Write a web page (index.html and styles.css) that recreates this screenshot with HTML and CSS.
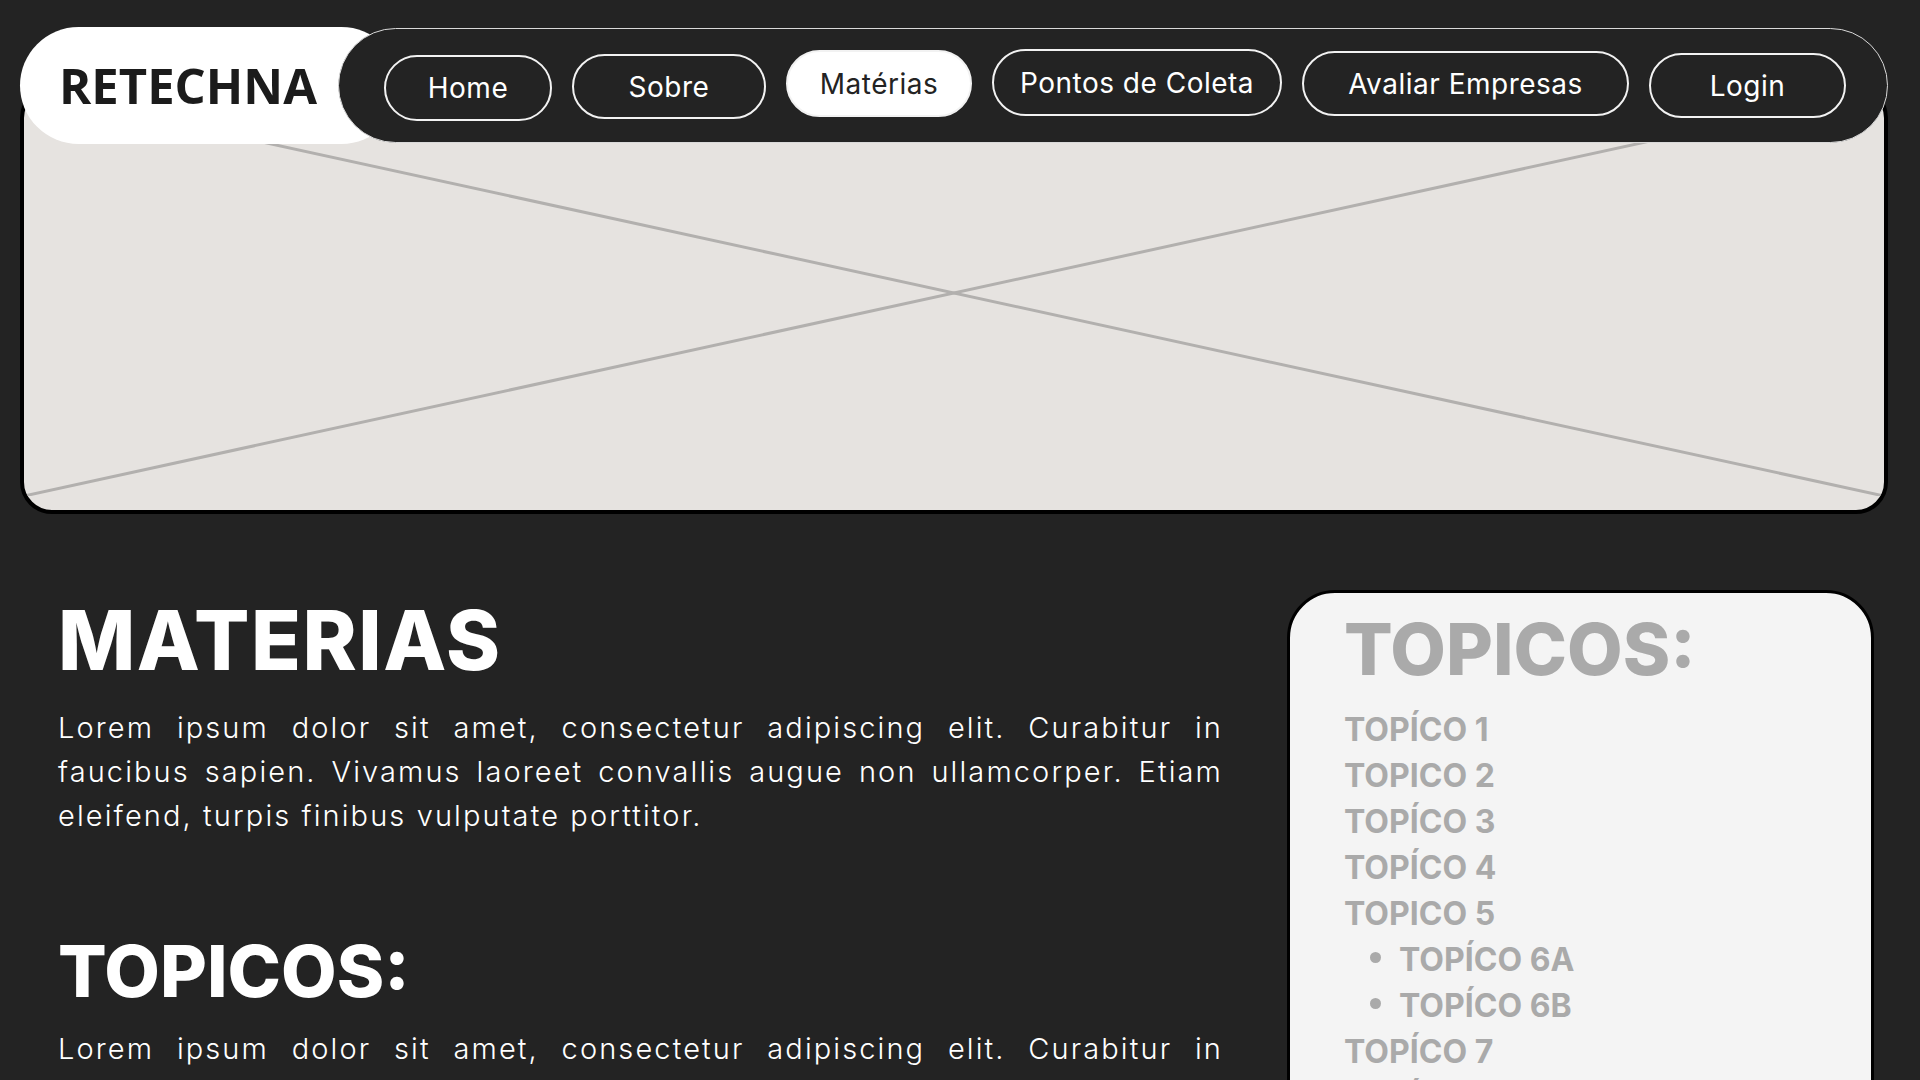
FILE: index.html
```html
<!DOCTYPE html>
<html lang="pt-BR">
<head>
<meta charset="utf-8">
<title>RETECHNA - Matérias</title>
<link rel="stylesheet" href="styles.css">
</head>
<body>
<div class="top">
  <header class="header">
    <div class="brand">RETECHNA</div>
    <nav class="nav">
      <a class="btn w-home" href="#">Home</a>
      <a class="btn w-sobre" href="#">Sobre</a>
      <a class="btn btn-active w-materias" href="#">Matérias</a>
      <a class="btn w-pontos" href="#">Pontos de Coleta</a>
      <a class="btn w-avaliar" href="#">Avaliar Empresas</a>
      <a class="btn w-login" href="#">Login</a>
    </nav>
  </header>
  <div class="hero">
    <svg class="hero-svg" viewBox="0 0 1000 400" preserveAspectRatio="none" aria-hidden="true">
      <line x1="0" y1="0" x2="1000" y2="400" vector-effect="non-scaling-stroke"/>
      <line x1="0" y1="400" x2="1000" y2="0" vector-effect="non-scaling-stroke"/>
    </svg>
  </div>
</div>

<main class="main">
  <section class="content">
    <h1 class="title">MATERIAS</h1>
    <p class="text">Lorem ipsum dolor sit amet, consectetur adipiscing elit. Curabitur in faucibus sapien. Vivamus laoreet convallis augue non ullamcorper. Etiam eleifend, turpis finibus vulputate porttitor.</p>
    <h2 class="subtitle">TOPICOS:</h2>
    <p class="text text-tight">Lorem ipsum dolor sit amet, consectetur adipiscing elit. Curabitur in faucibus sapien. Vivamus laoreet convallis augue non ullamcorper. Etiam eleifend, turpis finibus vulputate porttitor.</p>
  </section>

  <aside class="card">
    <h2 class="card-title">TOPICOS:</h2>
    <ul class="topics">
      <li>TOPÍCO 1</li>
      <li>TOPICO 2</li>
      <li>TOPÍCO 3</li>
      <li>TOPÍCO 4</li>
      <li>TOPICO 5
        <ul class="subtopics">
          <li>TOPÍCO 6A</li>
          <li>TOPÍCO 6B</li>
        </ul>
      </li>
      <li>TOPÍCO 7</li>
      <li>TOPÍCO 8</li>
    </ul>
  </aside>
</main>
</body>
</html>
```

FILE: styles.css
```css
* {
  box-sizing: border-box;
}

html {
  overflow: hidden;
}

body {
  margin: 0;
  background: #232323;
  font-family: Inter, "Noto Sans", sans-serif;
  color: #ffffff;
}

.top {
  padding: 27px 32px 0 20px;
}

.header {
  position: relative;
  z-index: 2;
  display: flex;
  align-items: center;
}

.brand {
  flex: 0 0 380px;
  height: 117px;
  border-radius: 60px;
  background: #ffffff;
  color: #1b1b1b;
  font-family: "Open Sans", "Liberation Sans", sans-serif;
  font-weight: 700;
  font-size: 49px;
  line-height: 49px;
  letter-spacing: 0;
  display: flex;
  align-items: center;
  padding-left: 39px;
}

.nav {
  flex: 1;
  height: 115px;
  margin-left: -62px;
  border: 1.5px solid #d9d9d9;
  border-radius: 60px;
  background: #232323;
  display: flex;
  align-items: center;
  gap: 20px;
  padding-left: 45px;
}

.btn {
  height: 65px;
  border: 2px solid #f2f2f2;
  border-radius: 40px;
  display: flex;
  align-items: center;
  justify-content: center;
  color: #ffffff;
  text-decoration: none;
  font-size: 28px;
  line-height: 28px;
  letter-spacing: 0.5px;
}

.btn-active {
  background: #ffffff;
  color: #232323;
}

.w-home { width: 168px; height: 66px; margin-top: 5px; }
.w-sobre { width: 194px; margin-top: 2px; }
.w-materias { width: 186px; height: 67px; margin-bottom: 4px; }
.w-pontos { width: 290px; height: 67px; margin-bottom: 6px; }
.w-avaliar { width: 327px; margin-bottom: 4px; }
.w-login { width: 197px; }

.hero {
  position: relative;
  z-index: 1;
  margin-top: -58px;
  background: #e6e3e0;
  border: 4px solid #000000;
  border-radius: 32px;
  padding-bottom: 14px;
  overflow: hidden;
}

.hero-svg {
  display: block;
  width: 100%;
  height: 406px;
}

.hero-svg line {
  stroke: #b2b0ae;
  stroke-width: 3px;
}

.main {
  display: grid;
  grid-template-columns: 1fr 587px;
  column-gap: 64px;
  align-items: start;
  padding: 76px 46px 0 58px;
}

.content {
  padding-top: 10px;
}

.title {
  margin: 0;
  font-size: 82px;
  line-height: 82px;
  font-weight: 800;
  letter-spacing: 1.5px;
}

.text {
  margin: 24px 0 0;
  font-size: 29px;
  line-height: 44px;
  font-weight: 300;
  letter-spacing: 2.1px;
  text-align: justify;
}

.subtitle {
  margin: 97px 0 0;
  font-size: 72px;
  line-height: 72px;
  font-weight: 800;
  letter-spacing: 0;
}

.text-tight {
  margin-top: 20px;
}

.card {
  background: #f4f4f4;
  border: 3px solid #000000;
  border-radius: 48px;
  padding: 20px 20px 120px 54px;
  color: #aaaaaa;
  min-height: 700px;
}

.card-title {
  margin: 0;
  font-size: 72px;
  line-height: 72px;
  font-weight: 800;
  letter-spacing: 0;
}

.topics {
  list-style: none;
  margin: 22px 0 0;
  padding: 0;
  font-size: 32px;
  line-height: 46px;
  font-weight: 700;
}

.subtopics {
  list-style: none;
  margin: 0;
  padding: 0 0 0 26px;
}

.subtopics li::before {
  content: "";
  display: inline-block;
  width: 11px;
  height: 11px;
  border-radius: 50%;
  background: #aaaaaa;
  margin-right: 18px;
  vertical-align: 8px;
}
```
